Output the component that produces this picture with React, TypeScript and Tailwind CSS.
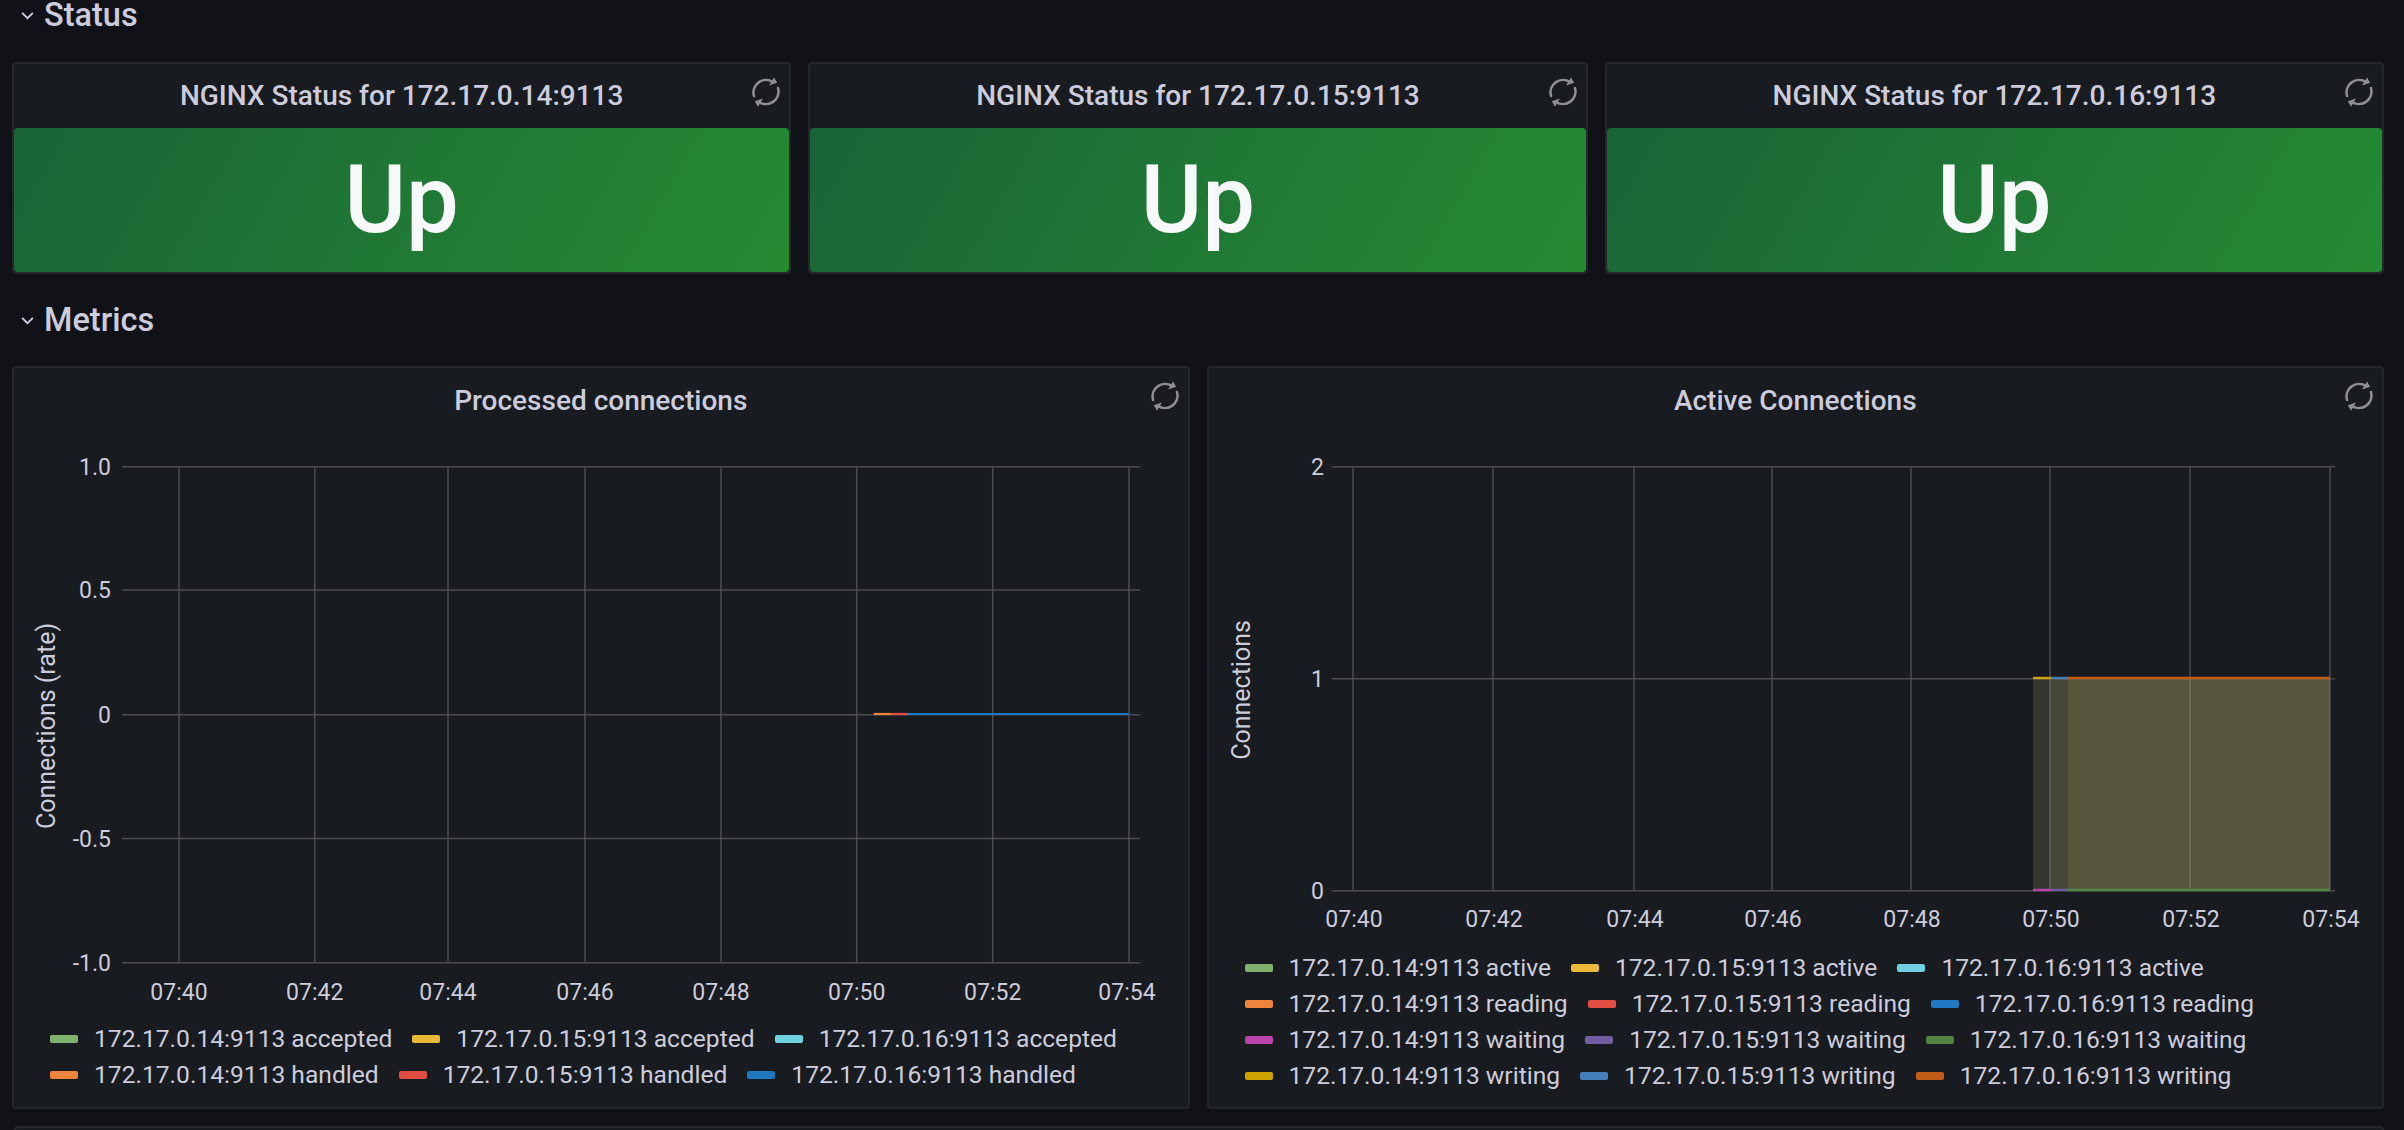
import React from 'react';

const font = { fontFamily: 'Roboto, sans-serif' };

const hosts = ['172.17.0.14:9113', '172.17.0.15:9113', '172.17.0.16:9113'];

const processedLegend = [
  [
    { label: '172.17.0.14:9113 accepted', color: 'bg-[#7eb26d]' },
    { label: '172.17.0.15:9113 accepted', color: 'bg-[#eab839]' },
    { label: '172.17.0.16:9113 accepted', color: 'bg-[#6ed0e0]' },
  ],
  [
    { label: '172.17.0.14:9113 handled', color: 'bg-[#ef843c]' },
    { label: '172.17.0.15:9113 handled', color: 'bg-[#e24d42]' },
    { label: '172.17.0.16:9113 handled', color: 'bg-[#1f78c1]' },
  ],
];

const activeLegend = [
  [
    { label: '172.17.0.14:9113 active', color: 'bg-[#7eb26d]' },
    { label: '172.17.0.15:9113 active', color: 'bg-[#eab839]' },
    { label: '172.17.0.16:9113 active', color: 'bg-[#6ed0e0]' },
  ],
  [
    { label: '172.17.0.14:9113 reading', color: 'bg-[#ef843c]' },
    { label: '172.17.0.15:9113 reading', color: 'bg-[#e24d42]' },
    { label: '172.17.0.16:9113 reading', color: 'bg-[#1f78c1]' },
  ],
  [
    { label: '172.17.0.14:9113 waiting', color: 'bg-[#ba43a9]' },
    { label: '172.17.0.15:9113 waiting', color: 'bg-[#705da0]' },
    { label: '172.17.0.16:9113 waiting', color: 'bg-[#508642]' },
  ],
  [
    { label: '172.17.0.14:9113 writing', color: 'bg-[#cca300]' },
    { label: '172.17.0.15:9113 writing', color: 'bg-[#447ebc]' },
    { label: '172.17.0.16:9113 writing', color: 'bg-[#c15c17]' },
  ],
];

const timeLabels = ['07:40', '07:42', '07:44', '07:46', '07:48', '07:50', '07:52', '07:54'];
const GRID = '#4b4d51';
const TICK = '#ccccdc';

function SyncIcon() {
  return (
    <svg width="30" height="30" viewBox="-15 -15 30 30" fill="none">
      <g stroke="#8e8e95" strokeWidth="2.6" strokeLinecap="round">
        <path d="M-12 4A12.6 12.6 0 0 1 7 -10" />
        <path d="M12 -4A12.6 12.6 0 0 1 -7 10" />
      </g>
      <g fill="#8e8e95">
        <path d="M11.2 -9.3L8 -14.6L3 -6.5Z" />
        <path d="M-11.2 9.3L-8 14.8L-3 6.5Z" />
      </g>
    </svg>
  );
}

function RowHeader({ title, className }: { title: string; className: string }) {
  return (
    <div className={`flex items-center pl-[20px] gap-[9px] text-[#ccccdc] ${className}`}>
      <svg width="15" height="15" viewBox="0 0 14 14" fill="none">
        <path d="M2 4.5L7 9.5L12 4.5" stroke="#ccccdc" strokeWidth="1.8" />
      </svg>
      <span className="text-[32.5px] font-medium leading-[30px]">{title}</span>
    </div>
  );
}

function PanelTitle({ title, height }: { title: string; height: string }) {
  return (
    <div className={`relative flex items-center justify-center shrink-0 ${height}`}>
      <span className="text-[28px] font-medium text-[#ccccdc] leading-none">{title}</span>
      <div className="absolute right-[8px] top-[13px]">
        <SyncIcon />
      </div>
    </div>
  );
}

function StatusPanel({ host }: { host: string }) {
  return (
    <div className="h-[212px] bg-[#181b1f] border-2 border-[#24272c] rounded-[4px] flex flex-col">
      <PanelTitle title={`NGINX Status for ${host}`} height="h-[64px]" />
      <div className="flex-1 flex items-center justify-center rounded-[4px] bg-[linear-gradient(120deg,#1a6437,#258b32)]">
        <span className="text-[94px] font-medium text-[#f7f8fa] leading-none">Up</span>
      </div>
    </div>
  );
}

function Legend({ rows }: { rows: { label: string; color: string }[][] }) {
  return (
    <div className="pl-[36px] flex flex-col">
      {rows.map((row, i) => (
        <div key={i} className="flex items-center gap-[20px] h-[36px]">
          {row.map((item) => (
            <div key={item.label} className="flex items-center gap-[16px]">
              <span className={`w-[28px] h-[8px] rounded-[2px] ${item.color}`} />
              <span className="text-[24.6px] text-[#ccccdc] leading-none whitespace-nowrap">{item.label}</span>
            </div>
          ))}
        </div>
      ))}
    </div>
  );
}

function ProcessedChart() {
  const xs = [179, 314.7, 448, 585, 721, 856.7, 992.7, 1129];
  const ys = [
    { y: 466.7, t: '1.0' },
    { y: 590, t: '0.5' },
    { y: 714.7, t: '0' },
    { y: 838.5, t: '-0.5' },
    { y: 962.7, t: '-1.0' },
  ];
  return (
    <svg width="1174" height="587" viewBox="14 434 1174 587" className="block shrink-0" style={font}>
      {ys.map((r) => (
        <g key={r.t}>
          <line x1="122" x2="1140" y1={r.y} y2={r.y} stroke={GRID} strokeWidth="1.5" />
          <text x="111" y={r.y + 8} textAnchor="end" fontSize="23" fill={TICK}>{r.t}</text>
        </g>
      ))}
      {xs.map((x, i) => (
        <g key={x}>
          <line x1={x} x2={x} y1="466" y2="963" stroke={GRID} strokeWidth="1.5" />
          <text x={i === 7 ? 1127 : x} y="1000" textAnchor="middle" fontSize="23" fill={TICK}>{timeLabels[i]}</text>
        </g>
      ))}
      <text transform="translate(55 726) rotate(-90)" textAnchor="middle" fontSize="25" fill={TICK}>Connections (rate)</text>
      <line x1="874" x2="891" y1="714" y2="714" stroke="#ef843c" strokeWidth="2.2" />
      <line x1="891" x2="908" y1="714" y2="714" stroke="#e24d42" strokeWidth="2.2" />
      <line x1="908" x2="1129" y1="714" y2="714" stroke="#1f78c1" strokeWidth="2.2" />
    </svg>
  );
}

function ActiveChart() {
  const xs = [1352, 1492, 1633, 1771, 1910, 2049, 2189, 2329];
  const ys = [
    { y: 466.7, t: '2' },
    { y: 678.7, t: '1' },
    { y: 890.7, t: '0' },
  ];
  return (
    <svg width="1174" height="516" viewBox="1208 434 1174 516" className="block shrink-0" style={font}>
      {ys.map((r) => (
        <g key={r.t}>
          <line x1="1331" x2="2334" y1={r.y} y2={r.y} stroke={GRID} strokeWidth="1.5" />
          <text x="1323" y={r.y + 8} textAnchor="end" fontSize="23" fill={TICK}>{r.t}</text>
        </g>
      ))}
      {xs.map((x, i) => (
        <g key={x}>
          <line x1={x} x2={x} y1="466" y2="891" stroke={GRID} strokeWidth="1.5" />
          <text x={x + 1} y="927" textAnchor="middle" fontSize="23" fill={TICK}>{timeLabels[i]}</text>
        </g>
      ))}
      <rect x="2032" y="678" width="16.5" height="212" fill="#b3ae6c" fillOpacity="0.19" />
      <rect x="2048.5" y="678" width="18.5" height="212" fill="#b3ae6c" fillOpacity="0.3" />
      <rect x="2067" y="678" width="262" height="212" fill="#b3ae6c" fillOpacity="0.4" />
      <line x1="2032" x2="2050" y1="678" y2="678" stroke="#cca300" strokeWidth="2.4" />
      <line x1="2050" x2="2067" y1="678" y2="678" stroke="#447ebc" strokeWidth="2.4" />
      <line x1="2067" x2="2329" y1="678" y2="678" stroke="#c15c17" strokeWidth="2.4" />
      <line x1="2032" x2="2050" y1="890" y2="890" stroke="#ba43a9" strokeWidth="2.4" />
      <line x1="2050" x2="2067" y1="890" y2="890" stroke="#705da0" strokeWidth="2.4" />
      <line x1="2067" x2="2329" y1="890" y2="890" stroke="#508642" strokeWidth="2.4" />
      <text transform="translate(1249 690) rotate(-90)" textAnchor="middle" fontSize="25" fill={TICK}>Connections</text>
    </svg>
  );
}

export default function App() {
  return (
    <div className="h-[1130px] overflow-hidden bg-[#111217]" style={font}>
      <RowHeader title="Status" className="h-[30px]" />
      <div className="grid grid-cols-3 gap-[17px] pl-[12px] pr-[20px] mt-[32px]">
        {hosts.map((host) => (
          <StatusPanel key={host} host={host} />
        ))}
      </div>
      <RowHeader title="Metrics" className="h-[30px] mt-[31px]" />
      <div className="grid grid-cols-2 gap-[17px] pl-[12px] pr-[20px] mt-[31px]">
        <div className="h-[743px] bg-[#181b1f] border-2 border-[#24272c] rounded-[4px] flex flex-col">
          <PanelTitle title="Processed connections" height="h-[66px]" />
          <ProcessedChart />
          <Legend rows={processedLegend} />
        </div>
        <div className="h-[743px] bg-[#181b1f] border-2 border-[#24272c] rounded-[4px] flex flex-col">
          <PanelTitle title="Active Connections" height="h-[66px]" />
          <ActiveChart />
          <Legend rows={activeLegend} />
        </div>
      </div>
      <div className="h-[40px] mt-[17px] ml-[14px] mr-[20px] bg-[#181b1f] border-2 border-[#24272c] rounded-[4px]" />
    </div>
  );
}
